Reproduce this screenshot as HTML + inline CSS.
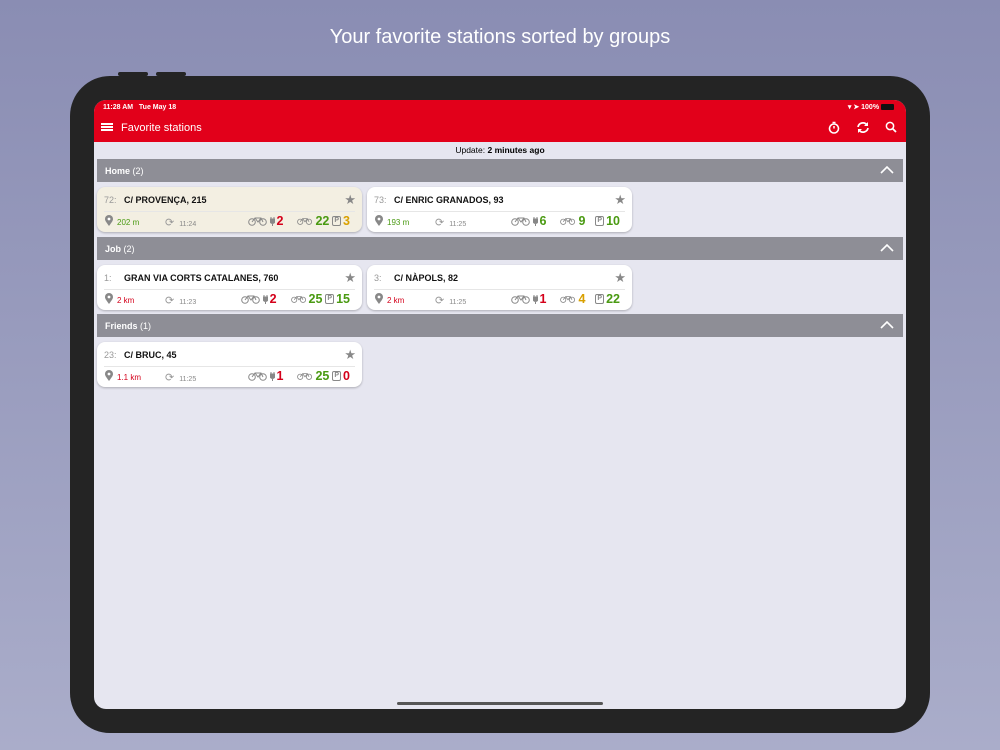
<!DOCTYPE html>
<html><head><meta charset="utf-8"><style>
*{margin:0;padding:0;box-sizing:border-box}
body{width:1000px;height:750px;overflow:hidden;background:linear-gradient(#8a8db3,#aaadca);font-family:"Liberation Sans",sans-serif;position:relative}
.t{position:absolute;top:26px;left:0;width:1000px;text-align:center;color:#fff;font-size:20px}
.dev{position:absolute;left:70px;top:76px;width:860px;height:657px;background:#242424;border-radius:40px}
.btn{position:absolute;background:#242424;height:4px;top:72px;width:30px;border-radius:2px}
.scr{position:absolute;left:94px;top:100px;width:812px;height:609px;background:#e6e6f0;border-radius:12px;overflow:hidden}
.hdr{position:absolute;left:0;top:0;width:812px;height:42px;background:#e2001a;color:#fff}
.a{position:absolute}
.grp{position:absolute;left:3px;width:806px;height:23px;background:#8e8e96;color:#fff;font-size:9px;font-weight:bold;padding:7px 8px}
.grp span{font-weight:normal}
.chev{position:absolute;right:9px;top:7px}
.card{position:absolute;width:265px;height:45px;background:#fff;border-radius:8px;box-shadow:0 1px 2px rgba(0,0,0,.25);font-size:9px}
.n{position:absolute;left:7px;top:8px;color:#999}
.nm{position:absolute;left:27px;top:8px;font-weight:bold;color:#111}
.st{position:absolute;right:6px;top:5px;color:#888;font-size:13px}
.dv{position:absolute;left:7px;right:7px;top:24px;border-top:1px solid #e6e6e6}
.pin{position:absolute;left:8px;top:28px}
.km{position:absolute;left:20px;top:31px;font-size:8px}
.tm{position:absolute;left:68px;top:29px;color:#888;font-size:7px}
.tm b{font-weight:normal;font-size:11px;margin-right:5px;color:#999}
.nums{position:absolute;right:12px;top:27px;font-size:12.5px;font-weight:bold;display:flex;align-items:center}
.nums svg{margin:0 2px 0 0}
.p{display:inline-block;border:1px solid #888;color:#888;font-size:7px;padding:0 1px;margin-right:2px;border-radius:2px;line-height:8px}
.r{color:#d4001a}.g{color:#4a9a12}.y{color:#d9a000}
</style></head><body>
<div class="t">Your favorite stations sorted by groups</div>
<div class="btn" style="left:118px"></div><div class="btn" style="left:156px"></div>
<div class="dev"></div>
<div class="scr">
<div class="hdr">
<div class="a" style="left:9px;top:4px;font-size:7px;font-weight:bold">11:28 AM&nbsp;&nbsp; Tue May 18</div>
<div class="a" style="right:12px;top:3px;font-size:7px;font-weight:bold">▾ ➤ 100% <span style="display:inline-block;width:13px;height:6px;background:#111;border-radius:1px;vertical-align:middle"></span></div>
<div class="a" style="left:7px;top:23px;width:12px;height:2px;background:#fff;box-shadow:0 3px 0 #fff,0 6px 0 #fff"></div>
<div class="a" style="left:27px;top:22px;font-size:11px">Favorite stations</div>
<svg class="a" style="left:734px;top:21px" width="12" height="13" viewBox="0 0 12 13"><circle cx="6" cy="7.5" r="4.5" fill="none" stroke="#fff" stroke-width="1.6"/><path d="M6 7.5V5M4.5 1.5h3" stroke="#fff" stroke-width="1.5"/></svg>
<svg class="a" style="left:762px;top:21px" width="14" height="13" viewBox="0 0 14 13"><path d="M2 6a5 5 0 0 1 9-2M12 7a5 5 0 0 1-9 2" fill="none" stroke="#fff" stroke-width="1.7"/><path d="M12 1v4H8zM2 12V8h4z" fill="#fff"/></svg>
<svg class="a" style="left:791px;top:21px" width="12" height="12" viewBox="0 0 12 12"><circle cx="5" cy="5" r="3.6" fill="none" stroke="#fff" stroke-width="1.5"/><path d="M7.5 7.5l3.5 3.5" stroke="#fff" stroke-width="1.8"/></svg>
</div>
<div class="a" style="top:45px;width:812px;text-align:center;font-size:8.5px">Update: <b>2 minutes ago</b></div>

<svg width="0" height="0" style="position:absolute"><defs>
<symbol id="bk" viewBox="0 0 20 10"><circle cx="4" cy="6" r="3.3" fill="none" stroke="#888"/><circle cx="15" cy="6" r="3.3" fill="none" stroke="#888"/><path d="M4 6l3-4h6l2 4M7 2l3 4 3-4" fill="none" stroke="#888"/></symbol>
<symbol id="pn" viewBox="0 0 8 11"><path d="M4 11C1 7 0 5.5 0 4a4 4 0 0 1 8 0c0 1.5-1 3-4 7z" fill="#888"/><circle cx="4" cy="4" r="1.4" fill="#fff"/></symbol>
<symbol id="pl" viewBox="0 0 5 10"><path d="M1 1v2M4 1v2M0 3h5v2a2.5 2.5 0 0 1-5 0zM2.5 7v3" fill="#888" stroke="#888"/></symbol>
<symbol id="cv" viewBox="0 0 14 8"><path d="M1 7l6-6 6 6" fill="none" stroke="#fff" stroke-width="1.6"/></symbol>
</defs></svg>

<div class="grp" style="top:59px">Home <span>(2)</span><svg class="chev" width="14" height="8"><use href="#cv"/></svg></div>
<div class="grp" style="top:137px">Job <span>(2)</span><svg class="chev" width="14" height="8"><use href="#cv"/></svg></div>
<div class="grp" style="top:214px">Friends <span>(1)</span><svg class="chev" width="14" height="8"><use href="#cv"/></svg></div>

<div class="card" style="left:3px;top:87px;background:#f3efe2">
<div class="n">72:</div><div class="nm">C/ PROVENÇA, 215</div><div class="st">★</div><div class="dv"></div>
<svg class="pin" width="8" height="11"><use href="#pn"/></svg><div class="km g">202 m</div>
<div class="tm"><b>⟳</b>11:24</div>
<div class="nums"><svg width="20" height="10"><use href="#bk"/></svg><svg width="5" height="10"><use href="#pl"/></svg><span class="r" style="margin-right:14px">2</span><svg width="16" height="10"><use href="#bk"/></svg><span class="g" style="margin-right:3px">22</span><span class="p">P</span><span class="y">3</span></div>
</div>
<div class="card" style="left:273px;top:87px">
<div class="n">73:</div><div class="nm">C/ ENRIC GRANADOS, 93</div><div class="st">★</div><div class="dv"></div>
<svg class="pin" width="8" height="11"><use href="#pn"/></svg><div class="km g">193 m</div>
<div class="tm"><b>⟳</b>11:25</div>
<div class="nums"><svg width="20" height="10"><use href="#bk"/></svg><svg width="5" height="10"><use href="#pl"/></svg><span class="g" style="margin-right:14px">6</span><svg width="16" height="10"><use href="#bk"/></svg><span class="g" style="margin-right:10px">9</span><span class="p">P</span><span class="g">10</span></div>
</div>
<div class="card" style="left:3px;top:165px">
<div class="n">1:</div><div class="nm">GRAN VIA CORTS CATALANES, 760</div><div class="st">★</div><div class="dv"></div>
<svg class="pin" width="8" height="11"><use href="#pn"/></svg><div class="km r">2 km</div>
<div class="tm"><b>⟳</b>11:23</div>
<div class="nums"><svg width="20" height="10"><use href="#bk"/></svg><svg width="5" height="10"><use href="#pl"/></svg><span class="r" style="margin-right:14px">2</span><svg width="16" height="10"><use href="#bk"/></svg><span class="g" style="margin-right:3px">25</span><span class="p">P</span><span class="g">15</span></div>
</div>
<div class="card" style="left:273px;top:165px">
<div class="n">3:</div><div class="nm">C/ NÀPOLS, 82</div><div class="st">★</div><div class="dv"></div>
<svg class="pin" width="8" height="11"><use href="#pn"/></svg><div class="km r">2 km</div>
<div class="tm"><b>⟳</b>11:25</div>
<div class="nums"><svg width="20" height="10"><use href="#bk"/></svg><svg width="5" height="10"><use href="#pl"/></svg><span class="r" style="margin-right:14px">1</span><svg width="16" height="10"><use href="#bk"/></svg><span class="y" style="margin-right:10px">4</span><span class="p">P</span><span class="g">22</span></div>
</div>
<div class="card" style="left:3px;top:242px">
<div class="n">23:</div><div class="nm">C/ BRUC, 45</div><div class="st">★</div><div class="dv"></div>
<svg class="pin" width="8" height="11"><use href="#pn"/></svg><div class="km r">1.1 km</div>
<div class="tm"><b>⟳</b>11:25</div>
<div class="nums"><svg width="20" height="10"><use href="#bk"/></svg><svg width="5" height="10"><use href="#pl"/></svg><span class="r" style="margin-right:14px">1</span><svg width="16" height="10"><use href="#bk"/></svg><span class="g" style="margin-right:3px">25</span><span class="p">P</span><span class="r">0</span></div>
</div>

<div class="a" style="left:303px;top:602px;width:206px;height:3px;background:#555;border-radius:2px"></div>
</div>
</body></html>
